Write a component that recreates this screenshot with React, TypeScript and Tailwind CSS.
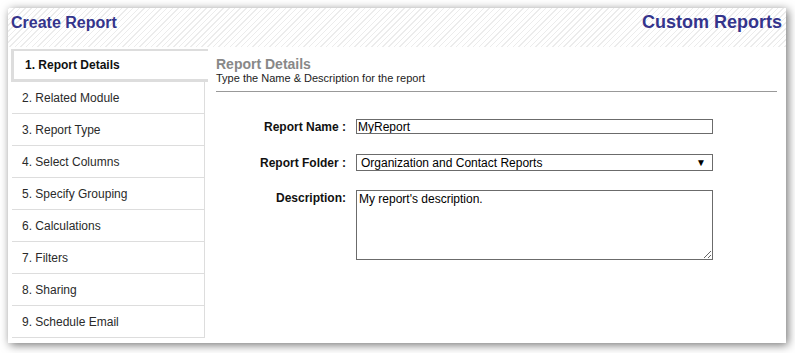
import { useState } from 'react'

const STEPS = [
  '1. Report Details',
  '2. Related Module',
  '3. Report Type',
  '4. Select Columns',
  '5. Specify Grouping',
  '6. Calculations',
  '7. Filters',
  '8. Sharing',
  '9. Schedule Email',
]

export default function App() {
  const [active, setActive] = useState(0)
  const [name, setName] = useState('MyReport')
  const [desc, setDesc] = useState("My report's description.")

  return (
    <div className="w-[795px] h-[353px] bg-white pt-2 pl-2 font-['Liberation_Sans',Arial,sans-serif]">
      <div className="w-[778px] h-[335px] bg-white shadow-[2px_2px_9px_rgba(0,0,0,0.55)] flex flex-col">

        {/* Header */}
        <div className="h-[39px] shrink-0 flex items-start justify-between px-[3px] pt-[5px] bg-[repeating-linear-gradient(135deg,#ececec_0px,#ececec_1px,#ffffff_1px,#ffffff_4px)]">
          <span className="text-[16px] leading-[20px] font-bold text-[#34348c]">Create Report</span>
          <span className="text-[18px] leading-[22px] font-bold text-[#34348c] -mt-[2px] mr-[1px]">Custom Reports</span>
        </div>

        <div className="flex flex-1 min-h-0">
          {/* Steps */}
          <div className="w-[197px] shrink-0 ml-[3px] mt-[2px] flex flex-col">
            {STEPS.map((s, i) => (
              i === active ? (
                <div
                  key={s}
                  className="h-[33px] border-l-[3px] border-t-2 border-b-[3px] border-[#dddddd] pl-[11px] flex items-center text-[12px] font-bold text-[#111]"
                >
                  {s}
                </div>
              ) : (
                <div
                  key={s}
                  onClick={() => setActive(i)}
                  className="h-[32px] ml-[1px] w-[193px] border-b border-r border-[#dddddd] pl-[10px] flex items-center text-[12px] text-[#2a2a2a] cursor-pointer"
                >
                  {s}
                </div>
              )
            ))}
          </div>

          {/* Content */}
          <div className="flex-1 pl-[8px] pr-[9px] pt-[10px]">
            <div className="border-b border-[#999] pb-[6px]">
              <div className="text-[14px] leading-[15px] font-bold text-[#888]">Report Details</div>
              <div className="text-[11px] leading-[13px] text-[#222]">Type the Name &amp; Description for the report</div>
            </div>

            <div className="grid grid-cols-[130px_357px] gap-x-[10px] mt-[27px] text-[12px]">
              <div className="h-[15px] flex items-center justify-end font-bold text-[#111]">Report Name :</div>
              <input
                value={name}
                onChange={e => setName(e.target.value)}
                className="h-[15px] border border-[#6b6b6b] px-[1px] text-[12px] leading-[13px] text-black outline-none"
              />

              <div className="h-[17px] mt-[20px] flex items-center justify-end font-bold text-[#111]">Report Folder :</div>
              <div className="h-[17px] mt-[20px] border border-[#6b6b6b] pl-[4px] pr-[6px] flex items-center justify-between text-black">
                <span>Organization and Contact Reports</span>
                <span className="text-[10px]">▼</span>
              </div>

              <div className="mt-[19px] flex justify-end font-bold text-[#111] leading-[14px] pt-[1px]">Description:</div>
              <textarea
                value={desc}
                onChange={e => setDesc(e.target.value)}
                className="mt-[19px] h-[70px] border border-[#6b6b6b] px-[2px] py-[1px] text-[12px] leading-[14px] text-black outline-none resize"
              />
            </div>
          </div>
        </div>
      </div>
    </div>
  )
}
